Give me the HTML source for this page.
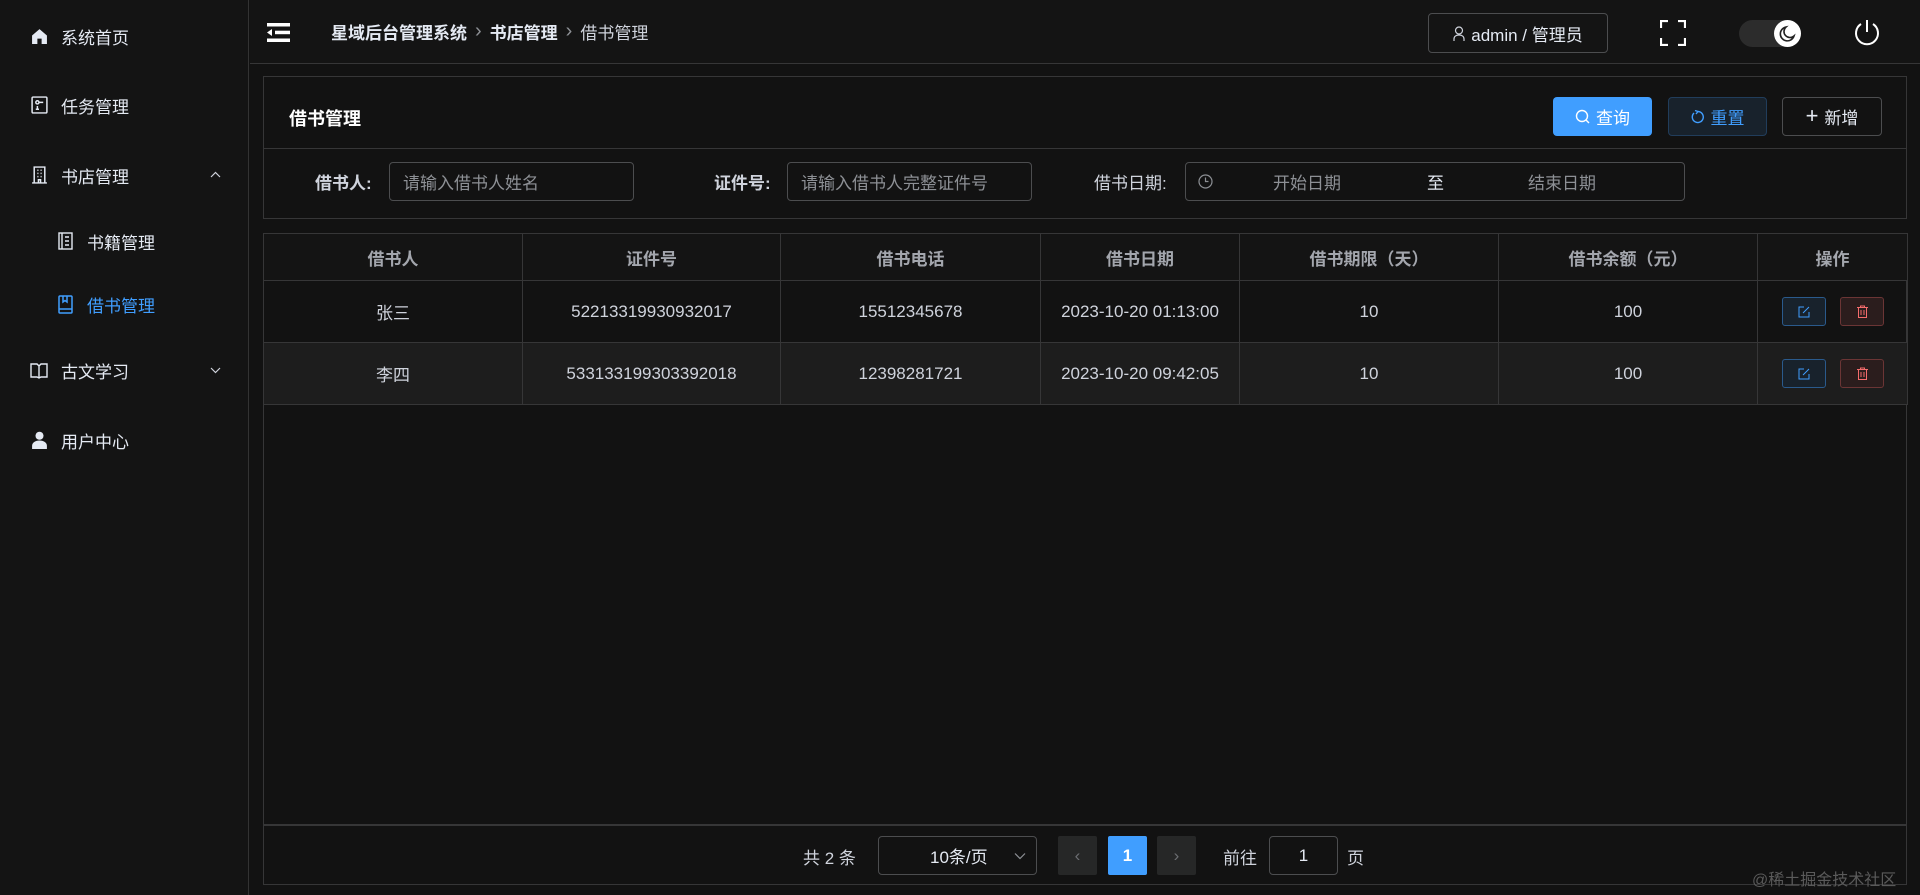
<!DOCTYPE html>
<html><head><meta charset="utf-8"><style>
*{box-sizing:border-box;margin:0;padding:0}
body{width:1920px;height:895px;background:#121212;color:#cfd3dc;font-family:"Liberation Sans","Noto Sans CJK SC",sans-serif;font-size:17px;position:relative;overflow:hidden}
.abs{position:absolute}
.side{left:0;top:0;width:249px;height:895px;background:#141414;border-right:1px solid #333}
.mi{position:absolute;left:0;width:248px;height:40px;display:flex;align-items:center;color:#e5eaf3}
.mi svg{position:absolute}
.mi span{position:absolute}
.hdr{left:250px;top:0;width:1670px;height:64px;background:#141414;border-bottom:1px solid #363637}
.card{border:1px solid #363637;background:#121212}
.inp{position:absolute;border:1px solid #4c4d4f;border-radius:4px;height:39px;color:#8d9095;display:flex;align-items:center;padding-left:13px}
.lbl{position:absolute;font-weight:bold;color:#cfd3dc}
.btn{position:absolute;height:39px;border-radius:4px;display:flex;align-items:center;justify-content:center;gap:6px}
table{border-collapse:collapse;position:absolute;left:263px;top:233px;width:1644px;table-layout:fixed}
td,th{border:1px solid #363637;text-align:center;color:#cfd3dc;font-weight:normal}
th{height:47px;font-weight:bold;color:#a3a6ad;background:#141414}
td{height:62px}
tr.alt td{background:#1d1d1d}
.ib{display:inline-block;width:44px;height:29px;border-radius:3px;vertical-align:middle;margin:0 7px;position:relative}
.sep{color:#8d9095;font-weight:normal;margin:0 8px;font-size:20px}
</style></head><body>
<div class="abs side">
 <div class="mi" style="top:16px"><svg style="left:31px" width="17" height="17" viewBox="0 0 16 16"><path d="M8 1L1 7v8h5v-5h4v5h5V7z" fill="#e5eaf3"/></svg><span style="left:61px">系统首页</span></div>
 <div class="mi" style="top:85px"><svg style="left:31px" width="17" height="18" viewBox="0 0 16 17" fill="none" stroke="#e5eaf3" stroke-width="1.4"><rect x="1" y="1" width="14" height="15" rx="1"/><circle cx="6" cy="6" r="1.5"/><path d="M7.5 6h4M6 9.5v3M4.5 12.5h3"/></svg><span style="left:61px">任务管理</span></div>
 <div class="mi" style="top:155px"><svg style="left:31px" width="17" height="18" viewBox="0 0 16 17" fill="none" stroke="#e5eaf3" stroke-width="1.4"><path d="M3 16V1h10v15M1 16h14M6 4h1M9 4h1M6 7h1M9 7h1M6 10h1M9 10h1M7 16v-3h2v3"/></svg><span style="left:61px">书店管理</span><svg style="left:210px" width="11" height="8" viewBox="0 0 11 8" fill="none" stroke="#cfd3dc" stroke-width="1.2"><path d="M1 6l4.5-4.5L10 6"/></svg></div>
 <div class="mi" style="top:221px"><svg style="left:58px" width="15" height="18" viewBox="0 0 15 18" fill="none" stroke="#e5eaf3" stroke-width="1.4"><rect x="1" y="1" width="13" height="16"/><path d="M4 1v16M7 5h4M7 9h4M7 13h4"/></svg><span style="left:87px">书籍管理</span></div>
 <div class="mi" style="top:284px;color:#409eff"><svg style="left:58px" width="15" height="19" viewBox="0 0 15 19" fill="none" stroke="#409eff" stroke-width="1.5"><rect x="1" y="1" width="13" height="17" rx="1"/><path d="M1 14h13M5 1v6l2-1.5L9 7V1"/></svg><span style="left:87px">借书管理</span></div>
 <div class="mi" style="top:350px"><svg style="left:30px" width="18" height="17" viewBox="0 0 18 17" fill="none" stroke="#e5eaf3" stroke-width="1.4"><path d="M1 2h6l2 2 2-2h6v13h-6l-2 1-2-1H1zM9 4v12"/></svg><span style="left:61px">古文学习</span><svg style="left:210px" width="11" height="8" viewBox="0 0 11 8" fill="none" stroke="#cfd3dc" stroke-width="1.2"><path d="M1 2l4.5 4.5L10 2"/></svg></div>
 <div class="mi" style="top:420px"><svg style="left:31px" width="17" height="18" viewBox="0 0 16 17"><circle cx="8" cy="4.5" r="3.8" fill="#e5eaf3"/><path d="M1 17v-3c0-3 3-5 7-5s7 2 7 5v3z" fill="#e5eaf3"/></svg><span style="left:61px">用户中心</span></div>
</div>
<div class="abs hdr">
 <svg class="abs" style="left:17px;top:23px" width="23" height="19" viewBox="0 0 23 19"><rect x="0" y="0" width="23" height="3.5" fill="#fff"/><rect x="8" y="7.7" width="15" height="3.5" fill="#fff"/><rect x="0" y="15.5" width="23" height="3.5" fill="#fff"/><path d="M0 9.5l5-3.5v7z" fill="#fff"/></svg>
 <div class="abs" style="left:81px;top:20px;font-weight:bold;color:#e5eaf3;display:flex;align-items:center;height:22px">星域后台管理系统<span class="sep">›</span>书店管理<span class="sep">›</span><span style="font-weight:normal;color:#cfd3dc">借书管理</span></div>
 <div class="abs" style="left:1178px;top:13px;width:180px;height:40px;border:1px solid #4c4d4f;border-radius:4px;display:flex;align-items:center;justify-content:center;gap:6px;color:#e5eaf3"><svg width="12" height="15" viewBox="0 0 12 15" fill="none" stroke="#cfd3dc" stroke-width="1.2"><circle cx="6" cy="4.5" r="3.5"/><path d="M1 15v-2c0-2.5 2-4 5-4s5 1.5 5 4v2"/></svg>admin / 管理员</div>
 <svg class="abs" style="left:1410px;top:20px" width="26" height="26" viewBox="0 0 26 26" fill="none" stroke="#fff" stroke-width="2.2"><path d="M1 8V1h7M18 1h7v7M25 18v7h-7M8 25H1v-7"/></svg>
 <div class="abs" style="left:1489px;top:20px;width:61px;height:27px;border-radius:14px;background:#2c2c2c"></div>
 <div class="abs" style="left:1524px;top:20px;width:27px;height:27px;border-radius:50%;background:#fff"></div>
 <svg class="abs" style="left:1529px;top:25px" width="17" height="17" viewBox="0 0 17 17"><path d="M7 2a7 7 0 1 0 8 9a6 6 0 0 1-8-9z" fill="none" stroke="#222" stroke-width="1.6"/></svg>
 <svg class="abs" style="left:1603px;top:18px" width="28" height="30" viewBox="0 0 28 30" fill="none" stroke="#fff" stroke-width="2"><path d="M14 2v12M8 6a11 11 0 1 0 12 0"/></svg>
</div>
<div class="abs card" style="left:263px;top:76px;width:1644px;height:143px"></div>
<div class="abs" style="left:263px;top:148px;width:1644px;height:1px;background:#363637"></div>
<div class="abs" style="left:289px;top:105px;font-size:18px;font-weight:bold;color:#fff">借书管理</div>
<div class="btn" style="left:1553px;top:97px;width:99px;background:#409eff;color:#fff"><svg width="15" height="15" viewBox="0 0 15 15" fill="none" stroke="#fff" stroke-width="1.4"><circle cx="7" cy="7" r="5.5"/><path d="M11 11l3 3"/></svg>查询</div>
<div class="btn" style="left:1668px;top:97px;width:99px;background:#18222c;border:1px solid #213d5b;color:#409eff"><svg width="14" height="14" viewBox="0 0 14 14" fill="none" stroke="#409eff" stroke-width="1.4"><path d="M3 3a5.5 5.5 0 1 0 4-1.5M7 1.5L4 .5M7 1.5L5 4"/></svg>重置</div>
<div class="btn" style="left:1782px;top:97px;width:100px;border:1px solid #4c4d4f;color:#e5eaf3"><span style="font-size:22px;font-weight:300;margin-top:-2px">+</span>新增</div>
<div class="lbl" style="left:315px;top:169px">借书人:</div>
<div class="inp" style="left:389px;top:162px;width:245px">请输入借书人姓名</div>
<div class="lbl" style="left:714px;top:169px">证件号:</div>
<div class="inp" style="left:787px;top:162px;width:245px">请输入借书人完整证件号</div>
<div class="lbl" style="left:1094px;top:169px;font-weight:normal">借书日期:</div>
<div class="inp" style="left:1185px;top:162px;width:500px;padding-left:12px"><svg width="15" height="15" viewBox="0 0 15 15" fill="none" stroke="#8d9095" stroke-width="1.2"><circle cx="7.5" cy="7.5" r="6.5"/><path d="M7.5 3.5v4h3"/></svg><span style="position:absolute;left:87px">开始日期</span><span style="position:absolute;left:241px;color:#e5eaf3">至</span><span style="position:absolute;left:342px">结束日期</span></div>
<div class="abs card" style="left:263px;top:233px;width:1644px;height:652px"></div>
<table>
<colgroup><col style="width:259px"><col style="width:258px"><col style="width:260px"><col style="width:199px"><col style="width:259px"><col style="width:259px"><col style="width:150px"></colgroup>
<tr><th>借书人</th><th>证件号</th><th>借书电话</th><th>借书日期</th><th>借书期限（天）</th><th>借书余额（元）</th><th>操作</th></tr>
<tr><td>张三</td><td>52213319930932017</td><td>15512345678</td><td>2023-10-20 01:13:00</td><td>10</td><td>100</td><td><span class="ib" style="background:#18222c;border:1px solid #2a5a8c"><svg style="position:absolute;left:15px;top:8px" width="12" height="12" viewBox="0 0 12 12" fill="none" stroke="#409eff" stroke-width="1"><path d="M6 1H1v10h10V6M5 7l6-6"/></svg></span><span class="ib" style="background:#2b1d1d;border:1px solid #6b3535"><svg style="position:absolute;left:16px;top:7px" width="11" height="13" viewBox="0 0 11 13" fill="none" stroke="#f56c6c" stroke-width="1"><path d="M0 2.5h11M3.5 2.5V1h4v1.5M1.5 2.5v10h8v-10M4 5v5M7 5v5"/></svg></span></td></tr>
<tr class="alt"><td>李四</td><td>533133199303392018</td><td>12398281721</td><td>2023-10-20 09:42:05</td><td>10</td><td>100</td><td><span class="ib" style="background:#18222c;border:1px solid #2a5a8c"><svg style="position:absolute;left:15px;top:8px" width="12" height="12" viewBox="0 0 12 12" fill="none" stroke="#409eff" stroke-width="1"><path d="M6 1H1v10h10V6M5 7l6-6"/></svg></span><span class="ib" style="background:#2b1d1d;border:1px solid #6b3535"><svg style="position:absolute;left:16px;top:7px" width="11" height="13" viewBox="0 0 11 13" fill="none" stroke="#f56c6c" stroke-width="1"><path d="M0 2.5h11M3.5 2.5V1h4v1.5M1.5 2.5v10h8v-10M4 5v5M7 5v5"/></svg></span></td></tr>
</table>
<div class="abs" style="left:263px;top:824px;width:1644px;height:2px;background:#363637"></div>
<div class="abs" style="left:803px;top:844px;color:#cfd3dc">共 2 条</div>
<div class="abs" style="left:878px;top:836px;width:159px;height:39px;border:1px solid #4c4d4f;border-radius:4px;color:#e5eaf3;display:flex;align-items:center;padding-left:51px">10条/页<svg style="position:absolute;right:10px;top:15px" width="12" height="8" viewBox="0 0 12 8" fill="none" stroke="#8d9095" stroke-width="1.2"><path d="M1 1.5l5 5 5-5"/></svg></div>
<div class="abs" style="left:1058px;top:836px;width:39px;height:39px;background:#262727;border-radius:2px;color:#6c6e72;text-align:center;line-height:39px">‹</div>
<div class="abs" style="left:1108px;top:836px;width:39px;height:39px;background:#409eff;border-radius:2px;color:#fff;font-weight:bold;text-align:center;line-height:39px">1</div>
<div class="abs" style="left:1157px;top:836px;width:39px;height:39px;background:#262727;border-radius:2px;color:#6c6e72;text-align:center;line-height:39px">›</div>
<div class="abs" style="left:1223px;top:844px">前往</div>
<div class="abs" style="left:1269px;top:836px;width:69px;height:39px;border:1px solid #4c4d4f;border-radius:4px;color:#e5eaf3;text-align:center;line-height:37px">1</div>
<div class="abs" style="left:1347px;top:844px">页</div>
<div class="abs" style="left:1752px;top:866px;color:#5a5a5a;font-size:16px">@稀土掘金技术社区</div>
</body></html>
